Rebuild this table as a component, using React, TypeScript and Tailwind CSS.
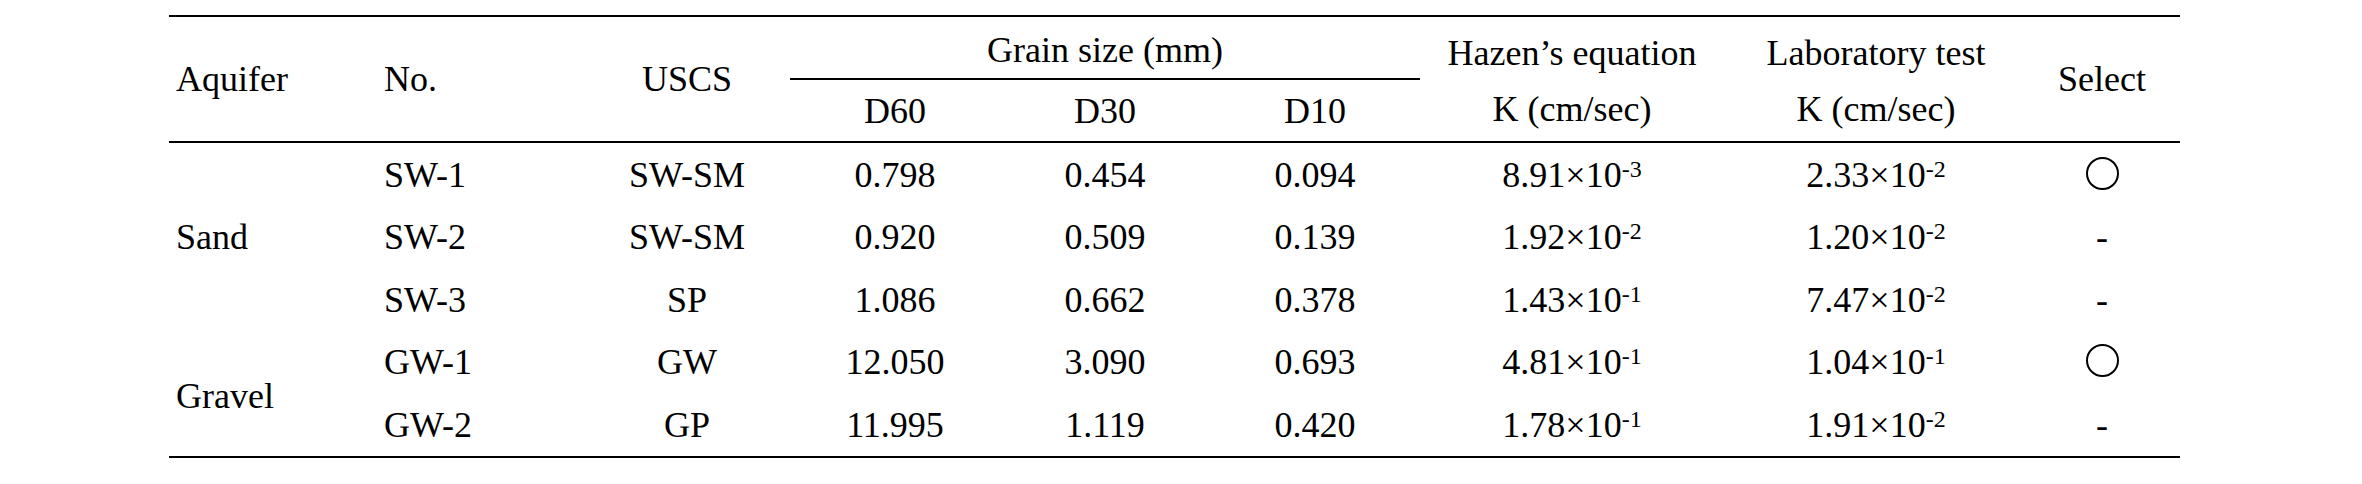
import React from 'react';

/**
 * Grain size / hydraulic conductivity table
 */

// 9 columns: Aquifer, No., USCS, D60, D30, D10, Hazen, Lab, Select
const COLS = 'grid grid-cols-[205px_210px_206px_210px_210px_210px_304px_304px_152px]';

type Row = {
  no: string;
  uscs: string;
  d60: string;
  d30: string;
  d10: string;
  hazen: [string, string];
  lab: [string, string];
  selected: boolean;
};

const SAND: Row[] = [
  { no: 'SW-1', uscs: 'SW-SM', d60: '0.798', d30: '0.454', d10: '0.094', hazen: ['8.91', '-3'], lab: ['2.33', '-2'], selected: true },
  { no: 'SW-2', uscs: 'SW-SM', d60: '0.920', d30: '0.509', d10: '0.139', hazen: ['1.92', '-2'], lab: ['1.20', '-2'], selected: false },
  { no: 'SW-3', uscs: 'SP', d60: '1.086', d30: '0.662', d10: '0.378', hazen: ['1.43', '-1'], lab: ['7.47', '-2'], selected: false },
];

const GRAVEL: Row[] = [
  { no: 'GW-1', uscs: 'GW', d60: '12.050', d30: '3.090', d10: '0.693', hazen: ['4.81', '-1'], lab: ['1.04', '-1'], selected: true },
  { no: 'GW-2', uscs: 'GP', d60: '11.995', d30: '1.119', d10: '0.420', hazen: ['1.78', '-1'], lab: ['1.91', '-2'], selected: false },
];

function Sci({ value }: { value: [string, string] }) {
  return (
    <span>
      {value[0]}×10
      <span className="text-[24px] align-[10px]">{value[1]}</span>
    </span>
  );
}

function DataRow({ row }: { row: Row }) {
  return (
    <>
      <div className="flex items-center pl-[10px]">{row.no}</div>
      <div className="flex items-center justify-center">{row.uscs}</div>
      <div className="flex items-center justify-center">{row.d60}</div>
      <div className="flex items-center justify-center">{row.d30}</div>
      <div className="flex items-center justify-center">{row.d10}</div>
      <div className="flex items-center justify-center">
        <Sci value={row.hazen} />
      </div>
      <div className="flex items-center justify-center">
        <Sci value={row.lab} />
      </div>
      <div className="flex items-center justify-center pr-[4px]">
        {row.selected ? (
          <span className="mb-[3px] h-[33px] w-[33px] rounded-full border-2 border-black" />
        ) : (
          <span>-</span>
        )}
      </div>
    </>
  );
}

export default function App() {
  return (
    <div className="h-[484px] w-[2362px] bg-white pt-[15px] pl-[169px] font-['Liberation_Serif'] text-[36px] leading-none text-black">
      <div className="w-[2011px] border-y-2 border-black">
        {/* 헤더 */}
        <div className={`${COLS} grid-rows-[63px_61px] border-b-2 border-black`}>
          <div className="row-span-2 flex items-center pl-[7px]">Aquifer</div>
          <div className="row-span-2 flex items-center pl-[10px]">No.</div>
          <div className="row-span-2 flex items-center justify-center">USCS</div>
          <div className="col-span-3 flex items-center justify-center border-b-2 border-black pt-[4px]">
            Grain size (mm)
          </div>
          <div className="row-span-2 flex flex-col items-center justify-center pt-[4px] leading-[56px]">
            <span>Hazen’s equation</span>
            <span>K (cm/sec)</span>
          </div>
          <div className="row-span-2 flex flex-col items-center justify-center pt-[4px] leading-[56px]">
            <span>Laboratory test</span>
            <span>K (cm/sec)</span>
          </div>
          <div className="row-span-2 flex items-center justify-center pr-[4px]">Select</div>
          <div className="flex items-center justify-center">D60</div>
          <div className="flex items-center justify-center">D30</div>
          <div className="flex items-center justify-center">D10</div>
        </div>

        {/* 본문 */}
        <div className={`${COLS} grid-rows-[63px_62px_63px_62px_63px]`}>
          <div className="row-span-3 flex items-center pl-[7px]">Sand</div>
          {SAND.map((row) => (
            <DataRow key={row.no} row={row} />
          ))}
          <div className="row-span-2 flex items-center pl-[7px] pt-[4px]">Gravel</div>
          {GRAVEL.map((row) => (
            <DataRow key={row.no} row={row} />
          ))}
        </div>
      </div>
    </div>
  );
}
